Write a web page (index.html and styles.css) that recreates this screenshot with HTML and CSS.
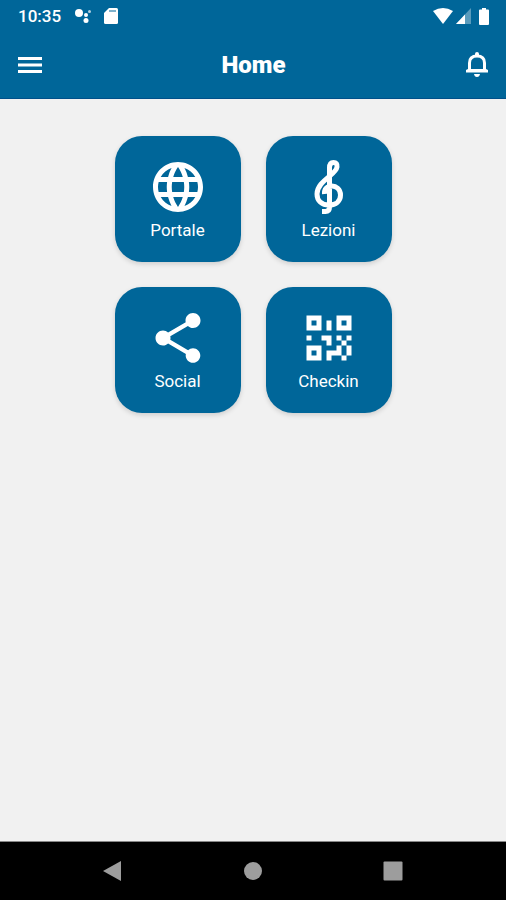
FILE: index.html
```html
<!DOCTYPE html>
<html lang="it">
<head>
  <meta charset="UTF-8" />
  <meta name="viewport" content="width=device-width, initial-scale=1" />
  <title>Home</title>
  <link rel="stylesheet" href="styles.css">
</head>
<body>
  <header class="header">
    <div class="status-bar">
      <span class="clock">10:35</span>
      <svg class="dots-icon" width="18" height="18" viewBox="0 0 18 18">
        <circle cx="5" cy="6" r="4" />
        <circle cx="12" cy="8" r="2" />
        <circle cx="12" cy="13.5" r="2.5" />
        <circle cx="15.5" cy="4.500" r="1.5" opacity="0.7" />
      </svg>
      <svg class="sd-icon" width="14" height="16" viewBox="0 0 14 16">
        <path d="M5 0h7.500q1.500 0 1.500 1.500v13q0 1.500-1.500 1.500h-11q-1.500 0-1.500-1.500V5z" />
        <path class="cutout" d="M5 2h7v2H5z" />
      </svg>
      <div class="status-right">
        <svg width="20" height="16" viewBox="0 0 20 16">
          <path d="M0 3Q10-3 20 3L10 16z" />
        </svg>
        <svg width="15" height="16" viewBox="0 0 15 16">
          <path d="M15 0v16H0z" opacity="0.35" />
          <path d="M9 6.400V16H0z" />
        </svg>
        <svg class="battery-icon" width="10" height="17" viewBox="0 0 10 17">
          <path d="M3 0h4v1.500h2q1 0 1 1V16q0 1-1 1H1q-1 0-1-1V2.500q0-1 1-1h2z" />
        </svg>
      </div>
    </div>
    <div class="toolbar">
      <button class="icon-btn" aria-label="Menu">
        <svg width="32" height="32" viewBox="0 0 24 24">
          <path d="M3 18h18v-2.300H3zM3 13.150h18v-2.300H3zM3 6v2.300h18V6z" />
        </svg>
      </button>
      <h1>Home</h1>
      <button class="icon-btn" aria-label="Notifiche">
        <svg width="32" height="32" viewBox="0 0 32 32">
          <path class="line" d="M8.500 22V14Q8.500 7 16 7T23.500 14V22" />
          <path d="M5 21l2-1h18l2 1v2.500H5zM14 7V5q0-2 2-2t2 2v2zM13 25h6q-.5 3-3 3t-3-3z" />
        </svg>
      </button>
    </div>
  </header>

  <main class="content">
    <div class="tiles">
      <button class="tile">
        <svg width="60" height="60" viewBox="0 0 24 24">
          <path d="M11.990 2C6.470 2 2 6.480 2 12s4.470 10 9.990 10C17.520 22 22 17.520 22 12S17.520 2 11.990 2zm6.930 6h-2.950c-.32-1.250-.78-2.450-1.380-3.560 1.840.63 3.370 1.910 4.330 3.560zM12 4.040c.83 1.200 1.480 2.530 1.910 3.960h-3.820c.43-1.430 1.080-2.760 1.910-3.960zM4.260 14C4.100 13.360 4 12.690 4 12s.1-1.360.26-2h3.380c-.08.66-.14 1.320-.14 2s.06 1.340.14 2H4.260zm.82 2h2.950c.32 1.250.78 2.450 1.380 3.560-1.840-.63-3.370-1.900-4.330-3.560zm2.950-8H5.080c.96-1.660 2.490-2.930 4.330-3.560C8.810 5.550 8.350 6.750 8.030 8zM12 19.960c-.83-1.200-1.480-2.530-1.910-3.960h3.820c-.43 1.430-1.080 2.760-1.910 3.960zM14.340 14H9.660c-.09-.66-.16-1.320-.16-2s.07-1.350.16-2h4.680c.09.65.16 1.320.16 2s-.07 1.340-.16 2zm.25 5.560c.6-1.110 1.060-2.310 1.380-3.560h2.950c-.96 1.650-2.490 2.930-4.330 3.560zM16.360 14c.08-.66.14-1.320.14-2s-.06-1.340-.14-2h3.380c.16.64.26 1.310.26 2s-.1 1.360-.26 2h-3.380z" />
        </svg>
        <span>Portale</span>
      </button>
      <button class="tile">
        <svg width="60" height="60" viewBox="0 0 60 60">
          <path class="clef" d="M23 54.500H26.500Q30.500 54.500 30.500 50V11Q30.500 5.500 34.500 5.500Q38.500 5.500 38 10C37 18 18 24 18 37C18 44 23 48 30 48C37 48 41.500 44 41.500 38C41.500 32 37 29 33 29C28 29 25 32 25.500 37" />
        </svg>
        <span>Lezioni</span>
      </button>
      <button class="tile">
        <svg width="60" height="60" viewBox="0 0 24 24">
          <path d="M18 16.080c-.76 0-1.440.3-1.960.77L8.910 12.700c.05-.23.09-.46.09-.7s-.04-.47-.09-.7l7.050-4.110c.54.5 1.250.81 2.040.81 1.660 0 3-1.340 3-3s-1.340-3-3-3-3 1.340-3 3c0 .24.040.47.09.7L8.040 9.810C7.500 9.310 6.790 9 6 9c-1.660 0-3 1.340-3 3s1.340 3 3 3c.79 0 1.500-.31 2.040-.81l7.120 4.160c-.05.21-.08.43-.08.65 0 1.610 1.310 2.920 2.920 2.920s2.920-1.310 2.920-2.920-1.310-2.920-2.920-2.920z" />
        </svg>
        <span>Social</span>
      </button>
      <button class="tile">
        <svg width="60" height="60" viewBox="0 0 24 24">
          <path fill-rule="evenodd" d="M3 11H5V13H3V11M11 5H13V9H11V5M9 11H13V15H11V13H9V11M15 11H17V13H19V11H21V13H19V15H21V19H19V21H17V19H13V21H11V17H15V15H17V13H15V11M19 19V15H17V19H19M15 3H21V9H15V3M17 5V7H19V5H17M3 3H9V9H3V3M5 5V7H7V5H5M3 15H9V21H3V15M5 17V19H7V17H5Z" />
        </svg>
        <span>Checkin</span>
      </button>
    </div>
  </main>

  <nav class="nav-bar">
    <button aria-label="Indietro">
      <svg width="20" height="20" viewBox="0 0 20 20"><path d="M18 0v20L0 10z" /></svg>
    </button>
    <button aria-label="Home">
      <svg width="20" height="20" viewBox="0 0 20 20"><circle cx="10" cy="10" r="9" /></svg>
    </button>
    <button aria-label="Recenti">
      <svg width="20" height="20" viewBox="0 0 20 20"><rect x="0.500" y="0.500" width="19" height="19" rx="1" /></svg>
    </button>
  </nav>
</body>
</html>
```

FILE: styles.css
```css
* {
  box-sizing: border-box;
}

body {
  font-family: Roboto, sans-serif;
  background-color: #f1f1f1;
  color: white;
  margin: 0;
  min-height: 100vh;
  display: flex;
  flex-direction: column;
}

svg {
  display: block;
  fill: currentColor;
}

button {
  background: none;
  border: none;
  padding: 0;
  color: inherit;
  font-family: inherit;
  cursor: pointer;
}

.header {
  background-color: #006699;
  border-bottom: 1px solid #00508a;
}

.status-bar {
  display: flex;
  align-items: center;
  height: 32px;
  padding: 0 17px 0 18px;
}

.clock {
  font-size: 17px;
  font-weight: 500;
  line-height: 32px;
}

.dots-icon {
  margin-left: 13px;
}

.sd-icon {
  margin-left: 12px;
}

.cutout {
  fill: #006699;
  opacity: 0.5;
}

.status-right {
  display: flex;
  align-items: center;
  gap: 3px;
  margin-left: auto;
}

.battery-icon {
  margin-left: 5px;
}

.toolbar {
  display: flex;
  align-items: center;
  justify-content: space-between;
  height: 66px;
  padding: 0 13px 0 14px;
}

.toolbar h1 {
  margin: 0;
  font-size: 24px;
  font-weight: 900;
}

.line {
  fill: none;
  stroke: currentColor;
  stroke-width: 3;
}

.content {
  flex: 1;
  padding: 37px 20px;
}

.tiles {
  display: grid;
  grid-template-columns: repeat(2, 126px);
  gap: 25px;
  justify-content: center;
}

.tile {
  display: flex;
  flex-direction: column;
  align-items: center;
  gap: 3px;
  height: 126px;
  padding-top: 21px;
  background-color: #006699;
  border-radius: 27px;
  box-shadow: 0 2px 5px rgba(0, 0, 0, 0.15);
  font-size: 17px;
  line-height: 20px;
}

.clef {
  fill: none;
  stroke: currentColor;
  stroke-width: 5;
  stroke-linejoin: round;
}

.nav-bar {
  display: flex;
  align-items: center;
  justify-content: center;
  gap: 120px;
  height: 59px;
  background-color: black;
  border-top: 1px solid #888;
  color: #9d9d9d;
}
```
